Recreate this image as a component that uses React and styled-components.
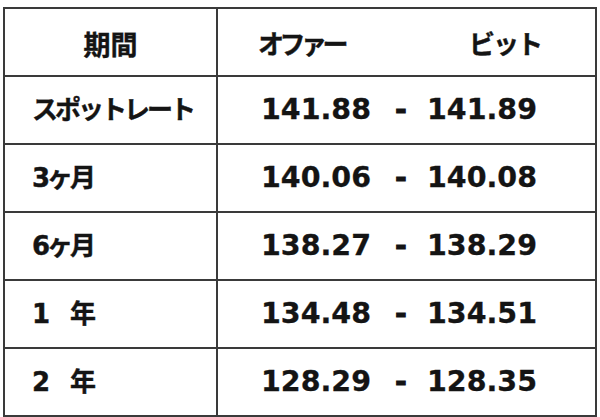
import React from "react";
import styled, { createGlobalStyle } from "styled-components";

const Global = createGlobalStyle`
  html, body { margin: 0; padding: 0; background: #ffffff; }
  body { font-family: "DejaVu Sans", "Noto Sans CJK JP", sans-serif; color: #141414; }
`;

const Page = styled.div`
  width: 600px;
  height: 417px;
  padding: 7px 0 0 3px;
  box-sizing: border-box;
  background: #fff;
`;

const Table = styled.table`
  border-collapse: collapse;
  width: 594px;
  border: 2px solid #2e2e2e;
  table-layout: fixed;
`;

const Row = styled.tr`
  height: 68px;
`;

const Cell = styled.td`
  border: 2px solid #3a3a3a;
  padding: 0;
  vertical-align: middle;
  width: ${(p) => (p.$first ? "211px" : "auto")};
`;

const HeadLabel = styled.div`
  font-family: "Noto Sans CJK JP", sans-serif;
  font-weight: 700;
  font-size: 27px;
  text-align: center;
  line-height: 1;
  padding-top: 2px;
  -webkit-text-stroke: 0.4px #141414;
`;

const HeadValues = styled.div`
  display: flex;
  justify-content: space-between;
  padding: 2px 54px 0 40px;
  font-family: "Noto Sans CJK JP", sans-serif;
  font-weight: 700;
  font-size: 26px;
  line-height: 1;
  -webkit-text-stroke: 0.4px #141414;
`;

const HeadWord = styled.span`
  letter-spacing: ${(p) => p.$spacing}px;
`;

const Label = styled.div`
  font-family: "DejaVu Sans", "Noto Sans CJK JP", sans-serif;
  font-weight: 700;
  font-size: 26px;
  letter-spacing: -3px;
  padding-left: 27px;
  line-height: 1;
  white-space: pre;
  -webkit-text-stroke: 0.4px #141414;
`;

const Values = styled.div`
  display: flex;
  align-items: center;
  padding-left: 43px;
  font-family: "DejaVu Sans", sans-serif;
  font-weight: 700;
  font-size: 28.5px;
  line-height: 1;
  -webkit-text-stroke: 0.3px #141414;
`;

const Num = styled.span`
  display: inline-block;
`;

const Dash = styled.span`
  display: inline-block;
  width: 56px;
  text-align: center;
  padding-left: 4px;
  box-sizing: border-box;
  -webkit-text-stroke: 1px #141414;
`;

const rows = [
  ["スポットレート", "141.88", "141.89"],
  ["3ヶ月", "140.06", "140.08"],
  ["6ヶ月", "138.27", "138.29"],
  ["1\u3000年", "134.48", "134.51"],
  ["2\u3000年", "128.29", "128.35"],
];

export default function App() {
  return (
    <>
      <Global />
      <Page>
        <Table>
          <tbody>
            <Row>
              <Cell $first>
                <HeadLabel>期間</HeadLabel>
              </Cell>
              <Cell>
                <HeadValues>
                  <HeadWord $spacing={-4.5}>オファー</HeadWord>
                  <HeadWord $spacing={-2}>ビット</HeadWord>
                </HeadValues>
              </Cell>
            </Row>
            {rows.map(([label, offer, bid]) => (
              <Row key={label}>
                <Cell $first>
                  <Label>{label}</Label>
                </Cell>
                <Cell>
                  <Values>
                    <Num>{offer}</Num>
                    <Dash>-</Dash>
                    <Num>{bid}</Num>
                  </Values>
                </Cell>
              </Row>
            ))}
          </tbody>
        </Table>
      </Page>
    </>
  );
}
